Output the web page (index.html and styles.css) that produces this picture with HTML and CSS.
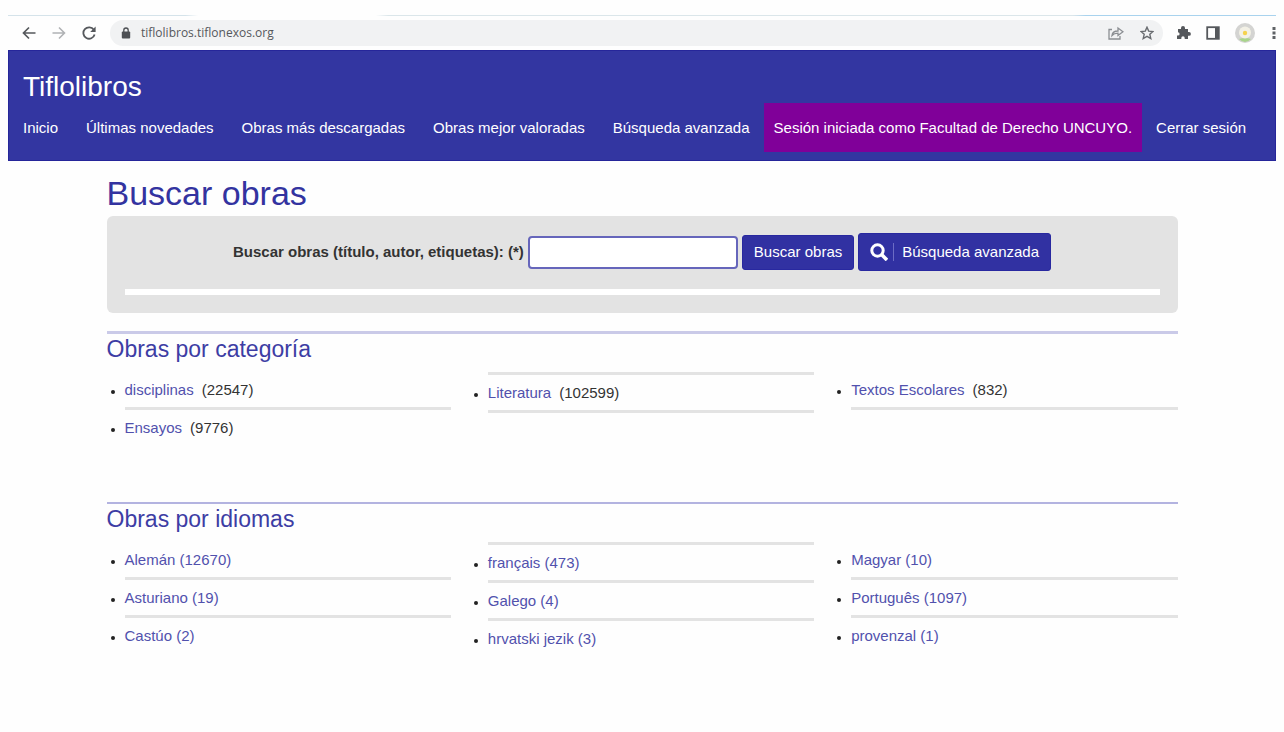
FILE: index.html
```html
<!DOCTYPE html>
<html lang="es">
<head>
<meta charset="utf-8">
<title>Tiflolibros</title>
<link rel="stylesheet" href="styles.css">
</head>
<body>
<div class="toolbar">
  <button class="tool" aria-label="Atrás"><svg width="14" height="14" viewBox="0 0 14 14" fill="none" stroke="#55585c" stroke-width="1.7"><path d="M13.500 7H1.500M7 1.500L1.500 7L7 12.500"/></svg></button>
  <button class="tool" aria-label="Adelante"><svg width="14" height="14" viewBox="0 0 14 14" fill="none" stroke="#b0b2b5" stroke-width="1.600"><path d="M.5 7h12M7 1.500L12.500 7L7 12.500"/></svg></button>
  <button class="tool" aria-label="Recargar"><svg width="14" height="14" viewBox="0 0 14 14"><path d="M11.800 3.800A5.700 5.700 0 1 0 12.600 8.500" fill="none" stroke="#55585c" stroke-width="1.800"/><path d="M13.600.6V6H8.200z" fill="#55585c"/></svg></button>
  <div class="address">
    <svg width="10" height="12" viewBox="0 0 10 12"><rect x=".8" y="4.500" width="8.400" height="7" rx="1" fill="#4d5054"/><path d="M2.800 5V3.200a2.200 2.200 0 0 1 4.400 0V5" fill="none" stroke="#4d5054" stroke-width="1.300"/></svg>
    <span class="url">tiflolibros.tiflonexos.org</span>
    <button class="tool" aria-label="Compartir"><svg width="16" height="14" viewBox="0 0 16 14" fill="none" stroke="#8b8e92" stroke-width="1.300"><path d="M4 3.500H1v9.500h11v-3M4 9.500c.4-3.500 2.500-4.500 6-4.500V2l5 3.700-5 3.800V7.200C7.500 7.200 5.500 7.700 4 9.500z"/></svg></button>
    <button class="tool" aria-label="Favorito"><svg width="14" height="14" viewBox="0 0 14 14" fill="none" stroke="#686b6f" stroke-width="1.400"><path d="M7 1.200l1.700 3.900 4.300.4-3.200 2.800 1 4.200L7 10.300l-3.800 2.200 1-4.200L1 5.500l4.300-.4z"/></svg></button>
  </div>
  <div class="extras">
    <button class="tool" aria-label="Extensiones"><svg width="15" height="15" viewBox="0 0 15 15" fill="#55585c"><path d="M2 4h3V3a2 2 0 0 1 4 0v1h3v3h1a1.900 1.900 0 0 1 0 3.800h-1V14H8.700v-1a1.700 1.700 0 0 0-3.400 0v1H1v-3.500h1a1.600 1.600 0 0 0 0-3.200z"/></svg></button>
    <button class="tool" aria-label="Panel lateral"><svg width="14" height="14" viewBox="0 0 14 14"><rect x="1.200" y="1.200" width="11.600" height="11.600" fill="none" stroke="#55585c" stroke-width="1.800"/><path d="M9 1h4v12H9z" fill="#55585c"/></svg></button>
    <button class="tool" aria-label="Perfil"><svg width="20" height="20" viewBox="0 0 20 20"><circle cx="10" cy="10" r="10" fill="#d4d4d2"/><path d="M4 16q6-2 12 0-6 6-12 0" fill="#a9d48c"/><circle cx="10" cy="9.500" r="6" fill="#f3f1e6"/><circle cx="10" cy="10" r="2.200" fill="#f5d24c"/></svg></button>
    <button class="tool" aria-label="Menú"><svg width="4" height="14" viewBox="0 0 4 14" fill="#5f6266"><rect x=".5" y="1" width="3" height="3"/><rect x=".5" y="5.500" width="3" height="3"/><rect x=".5" y="10" width="3" height="3"/></svg></button>
  </div>
</div>
<header class="site-header">
  <div class="brand">Tiflolibros</div>
  <nav class="nav">
    <a href="#">Inicio</a>
    <a href="#">Últimas novedades</a>
    <a href="#">Obras más descargadas</a>
    <a href="#">Obras mejor valoradas</a>
    <a href="#">Búsqueda avanzada</a>
    <span class="session">Sesión iniciada como Facultad de Derecho UNCUYO.</span>
    <a href="#">Cerrar sesión</a>
  </nav>
</header>
<main class="content">
  <h1>Buscar obras</h1>
  <form class="search">
    <div class="search-row">
      <label for="q">Buscar obras (título, autor, etiquetas): (*)</label>
      <input id="q" type="text">
      <button class="btn" type="submit">Buscar obras</button>
      <a class="btn btn-advanced" href="#"><svg width="18" height="18" viewBox="0 0 18 18" fill="none" stroke="#fff"><circle cx="7.500" cy="7.500" r="5.700" stroke-width="3"/><path d="M11.800 11.800L17 17" stroke-width="3.600"/></svg><span class="divider"></span>Búsqueda avanzada</a>
    </div>
    <hr>
  </form>
  <section class="group">
    <h2>Obras por categoría</h2>
    <div class="columns">
      <ul>
        <li><a href="#">disciplinas</a><span class="count">(22547)</span></li>
        <li><a href="#">Ensayos</a><span class="count">(9776)</span></li>
      </ul>
      <ul class="ruled closed">
        <li><a href="#">Literatura</a><span class="count">(102599)</span></li>
      </ul>
      <ul class="closed">
        <li><a href="#">Textos Escolares</a><span class="count">(832)</span></li>
      </ul>
    </div>
  </section>
  <section class="group group-languages">
    <h2>Obras por idiomas</h2>
    <div class="columns">
      <ul>
        <li><a href="#">Alemán (12670)</a></li>
        <li><a href="#">Asturiano (19)</a></li>
        <li><a href="#">Castúo (2)</a></li>
      </ul>
      <ul class="ruled">
        <li><a href="#">français (473)</a></li>
        <li><a href="#">Galego (4)</a></li>
        <li><a href="#">hrvatski jezik (3)</a></li>
      </ul>
      <ul>
        <li><a href="#">Magyar (10)</a></li>
        <li><a href="#">Português (1097)</a></li>
        <li><a href="#">provenzal (1)</a></li>
      </ul>
    </div>
  </section>
</main>
</body>
</html>
```
FILE: styles.css
```css
* { box-sizing: border-box; }
body {
  margin: 15px 8px 0;
  background: #fefefe;
  color: #333;
  font: 15px/20px "Liberation Sans", Arial, sans-serif;
}
a { text-decoration: none; }

.toolbar {
  display: flex;
  align-items: center;
  gap: 16px;
  height: 35px;
  padding-left: 14px;
  background: linear-gradient(90deg, #d5e3ea 14%, transparent 15% 29%, #dbe6ea 30% 84%, #a9d3ee 85%) top / 100% 1px no-repeat;
}
.tool {
  display: flex;
  padding: 0;
  border: 0;
  background: none;
}
.address {
  display: flex;
  flex: 1;
  align-items: center;
  gap: 16px;
  height: 26px;
  margin-left: -2px;
  padding: 0 9px 0 11px;
  border-radius: 13px;
  background: #f1f2f3;
}
.url {
  flex: 1;
  margin-left: -6px;
  color: #55585c;
  font: 12px/16px "Open Sans", sans-serif;
}
.extras {
  display: flex;
  align-items: center;
  gap: 15px;
  margin-left: -3px;
}
.extras .tool:last-child { margin-left: 2px; }

.site-header {
  padding: 19px 14px 8px;
  border: 1px solid #26269a;
  background: #3336a1;
  color: #fff;
}
.brand { font-size: 28px; line-height: 33px; }
.nav {
  display: flex;
  flex-wrap: wrap;
  gap: 0 28px;
  line-height: 49px;
}
.nav a { color: #fff; }
.session {
  margin: 0 -14px;
  padding: 0 10px;
  background: #800099;
}

.content { width: calc(100% - 197px); margin: 0 auto; }
h1 {
  margin: 12px 0 3px;
  color: #3333a0;
  font-size: 34px;
  font-weight: 400;
  line-height: 40px;
}
.search {
  padding: 17px 18px 18px;
  border-radius: 6px;
  background: #e3e3e3;
}
.search-row {
  display: flex;
  flex-wrap: wrap;
  align-items: center;
  justify-content: center;
  gap: 4px;
}
label { font-weight: 700; }
input {
  width: 210px;
  height: 33px;
  border: 2px solid #6666bb;
  border-radius: 4px;
  background: #fff;
}
.btn {
  display: flex;
  align-items: center;
  height: 35px;
  padding: 0 11px;
  border: 1px solid #2828a0;
  border-radius: 3px;
  background: #3131a2;
  color: #fff;
  font: inherit;
}
.btn-advanced { height: 38px; }
.divider {
  width: 1px;
  height: 18px;
  margin: 0 8px 0 5px;
  background: #6c6cc4;
}
hr {
  height: 6px;
  margin: 18px 0 0;
  border: 0;
  background: #fff;
}

.group {
  margin-top: 18px;
  border-top: 3px solid #cacae8;
}
.group-languages { margin-top: 54px; border-top: 2px solid #b3b3e0; }
h2 {
  margin: 0 0 8px;
  color: #3d3da4;
  font-size: 23px;
  font-weight: 400;
  line-height: 30px;
}
.columns {
  display: grid;
  grid-template-columns: repeat(3, 1fr);
  gap: 37px;
  padding-left: 18px;
}
ul { margin: 0; padding: 0; }
li { line-height: 35px; border-bottom: 3px solid #e3e3e3; }
li::marker { color: #222; font-size: 12px; }
li:last-child { border-bottom-color: transparent; }
.closed li:last-child { border-bottom-color: #e3e3e3; }
.ruled { border-top: 3px solid #e3e3e3; }
li a { color: #5151ad; }
.count { margin-left: 8px; }
```
